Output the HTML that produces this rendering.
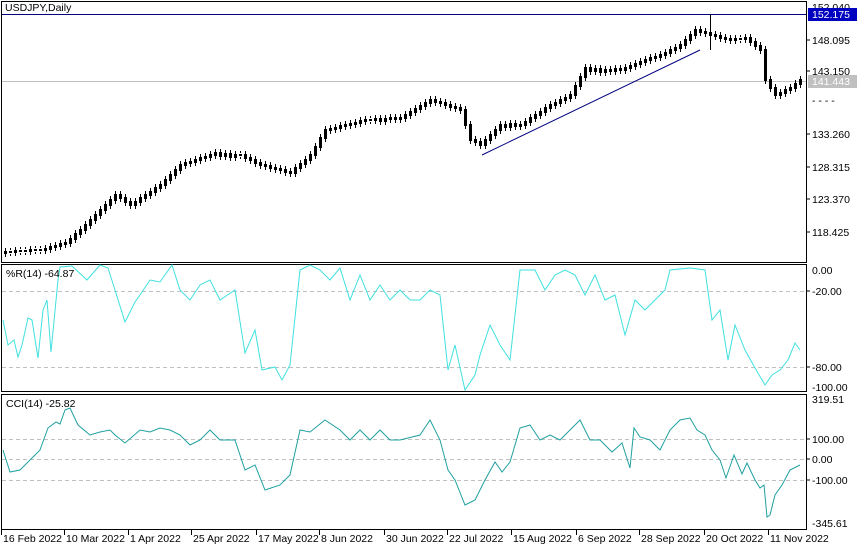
<!DOCTYPE html>
<html><head><meta charset="utf-8"><style>
html,body{margin:0;padding:0;background:#fff;width:860px;height:550px;overflow:hidden}
svg{display:block;font-family:"Liberation Sans",sans-serif;font-size:10.5px}
</style></head><body>
<svg width="860" height="550" xmlns="http://www.w3.org/2000/svg">
<rect width="860" height="550" fill="#fff"/>
<rect x="1.5" y="1.5" width="805" height="261" fill="none" stroke="#000"/>
<rect x="1.5" y="264.5" width="805" height="127" fill="none" stroke="#000"/>
<rect x="1.5" y="394.5" width="805" height="135" fill="none" stroke="#000"/>
<line x1="2" y1="14.5" x2="806" y2="14.5" stroke="#000080"/>
<line x1="2" y1="81.5" x2="806" y2="81.5" stroke="#c0c0c0"/>
<line x1="482" y1="155" x2="700" y2="50" stroke="#000080"/>
<line x1="2" y1="291.5" x2="806" y2="291.5" stroke="#c0c0c0" stroke-dasharray="4,3"/>
<line x1="2" y1="367.5" x2="806" y2="367.5" stroke="#c0c0c0" stroke-dasharray="4,3"/>
<line x1="2" y1="439.5" x2="806" y2="439.5" stroke="#c0c0c0" stroke-dasharray="4,3"/>
<line x1="2" y1="459.5" x2="806" y2="459.5" stroke="#c0c0c0" stroke-dasharray="4,3"/>
<line x1="2" y1="480.5" x2="806" y2="480.5" stroke="#c0c0c0" stroke-dasharray="4,3"/>
<defs>
<path id="c" d="M5.5 251V254M10.5 251V253M15.5 250V253M20.5 250V252M25.5 250V252M30.5 249V252M35.5 249V251M40.5 249V251M45.5 248V251M50.5 246V250M55.5 245V248M60.5 243V247M65.5 242V245M70.5 238V244M75.5 233V240M80.5 229V235M85.5 224V231M90.5 219V226M95.5 214V221M100.5 209V216M105.5 204V211M110.5 199V206M115.5 194V201M120.5 194V199M125.5 197V203M130.5 201V206M135.5 201V206M140.5 197V203M145.5 194V199M150.5 191V196M155.5 187V193M160.5 184V189M165.5 179V186M170.5 174V181M175.5 169V176M180.5 164V171M185.5 162V166M190.5 161V164M195.5 159V163M200.5 157V161M205.5 156V159M210.5 154V158M215.5 152V156M220.5 152V157M225.5 153V157M230.5 153V158M235.5 154V158M240.5 154V156M245.5 154V159M250.5 157V161M255.5 159V164M260.5 162V166M265.5 164V167M270.5 165V169M275.5 167V170M280.5 168V171M285.5 169V173M290.5 171V174M295.5 167V174M300.5 163V169M305.5 159V165M310.5 154V161M315.5 146V156M320.5 137V148M325.5 129V139M330.5 128V131M335.5 127V130M340.5 125V129M345.5 124V127M350.5 123V126M355.5 122V125M360.5 120V124M365.5 119V122M370.5 119V121M375.5 118V121M380.5 118V122M385.5 118V122M390.5 117V120M395.5 117V120M400.5 117V120M405.5 114V119M410.5 111V116M415.5 108V113M420.5 105V110M425.5 102V107M430.5 99V104M435.5 99V103M440.5 101V104M445.5 102V106M450.5 104V108M455.5 106V109M460.5 107V111M465.5 109V126M470.5 124V141M475.5 139V143M480.5 141V146M485.5 139V146M490.5 134V141M495.5 129V136M500.5 124V131M505.5 124V128M510.5 123V128M515.5 123V127M520.5 124V127M525.5 121V126M530.5 117V123M535.5 114V119M540.5 111V116M545.5 107V113M550.5 104V109M555.5 102V106M560.5 99V104M565.5 97V101M570.5 94V99M575.5 85V96M580.5 76V87M585.5 67V78M590.5 67V72M595.5 68V72M600.5 68V73M605.5 69V73M610.5 69V72M615.5 68V72M620.5 68V71M625.5 67V71M630.5 65V69M635.5 63V67M640.5 61V65M645.5 59V63M650.5 57V61M655.5 56V59M660.5 54V58M665.5 52V56M670.5 49V54M675.5 47V51M680.5 44V49M685.5 39V46M690.5 34V41M695.5 29V36M700.5 29V33M705.5 31V34M710.5 32V36M715.5 34V37M720.5 35V39M725.5 37V40M730.5 38V41M735.5 38V41M740.5 38V40M745.5 37V40M750.5 37V43M755.5 41V47M760.5 45V51M765.5 49V81M770.5 79V89M775.5 87V96M780.5 92V96M785.5 89V94M790.5 87V91M795.5 83V89M800.5 79V85"/>
</defs>
<use href="#c" stroke="#000" stroke-width="1" fill="none" transform="translate(0,-3)"/>
<use href="#c" stroke="#000" stroke-width="1" fill="none" transform="translate(0,3)"/>
<use href="#c" stroke="#000" stroke-width="3" fill="none"/>
<line x1="710.5" y1="14" x2="710.5" y2="50" stroke="#000"/>
<polyline fill="none" stroke="#40e0e0" stroke-width="1" points="3,320 8,345 14,340 18,357 22,345 28,318 32,320 38,358 43,310 47,300 51,352 58,280 60,267 72,266 87,280 100,265 108,268 115,290 125,322 135,302 140,295 150,280 160,282 172,265 180,290 190,300 200,285 210,280 220,300 235,290 245,353 255,330 262,370 275,367 282,380 290,365 300,270 310,265 320,270 330,280 340,268 350,300 360,275 370,300 380,285 390,300 400,290 410,300 420,300 430,290 440,295 448,370 455,345 465,390 475,375 480,355 490,325 500,345 510,360 520,270 535,270 545,290 555,275 565,270 575,275 585,295 595,275 605,300 615,295 625,335 635,300 645,310 655,300 665,290 670,270 690,268 705,270 712,320 720,310 728,360 735,325 745,350 755,368 765,385 772,375 780,370 788,360 795,343 800,350"/>
<polyline fill="none" stroke="#20a0a0" stroke-width="1" points="3,450 10,472 20,470 30,460 40,450 48,428 56,422 60,424 65,410 70,408 78,425 90,435 100,432 110,430 115,435 125,443 140,430 150,432 160,428 170,430 180,435 190,445 200,440 210,430 220,440 235,440 245,470 255,465 265,490 280,485 290,475 300,430 310,432 325,420 340,430 350,440 360,430 370,440 380,430 390,440 400,440 420,435 430,420 440,440 448,470 455,480 465,505 475,500 485,480 495,462 502,472 510,462 520,428 530,425 540,440 550,435 560,440 570,430 580,420 590,440 600,440 612,452 622,443 630,468 634,428 640,437 650,440 660,450 670,430 680,420 690,418 697,430 705,435 712,450 720,460 726,478 734,455 742,474 747,463 755,480 760,488 764,485 767,517 770,515 775,495 782,485 790,470 800,465"/>
<text x="5" y="11">USDJPY,Daily</text>
<text x="6" y="277">%R(14) -64.87</text>
<text x="6" y="407">CCI(14) -25.82</text>
<g fill="#000">
<text x="812" y="11">152.040</text>
<rect x="808" y="8" width="49" height="13" fill="#0000c0"/>
<text x="812" y="18" fill="#fff">152.175</text>
<text x="812" y="44">148.095</text>
<text x="812" y="75">143.150</text>
<rect x="808" y="75" width="49" height="13" fill="#c0c0c0"/>
<text x="812" y="85" fill="#fff">141.443</text>
<text x="812" y="104">- - - -</text>
<text x="812" y="138">133.260</text>
<text x="812" y="171">128.315</text>
<text x="812" y="203">123.370</text>
<text x="812" y="236">118.425</text>
<text x="812" y="274">0.00</text>
<text x="812" y="295">-20.00</text>
<text x="812" y="371">-80.00</text>
<text x="812" y="391">-100.00</text>
<text x="812" y="403">319.51</text>
<text x="812" y="443">100.00</text>
<text x="812" y="463">0.00</text>
<text x="812" y="484">-100.00</text>
<text x="812" y="527">-345.61</text>
</g>
<g stroke="#000">
<line x1="806" y1="40" x2="810" y2="40"/><line x1="806" y1="71" x2="810" y2="71"/>
<line x1="806" y1="134" x2="810" y2="134"/><line x1="806" y1="167" x2="810" y2="167"/>
<line x1="806" y1="199" x2="810" y2="199"/><line x1="806" y1="232" x2="810" y2="232"/>
<line x1="806" y1="291" x2="810" y2="291"/><line x1="806" y1="367" x2="810" y2="367"/>
<line x1="806" y1="439" x2="810" y2="439"/><line x1="806" y1="459" x2="810" y2="459"/>
<line x1="806" y1="480" x2="810" y2="480"/>
<path d="M1.5 530v5M64.5 530v5M128.5 530v5M191.5 530v5M256.5 530v5M319.5 530v5M384.5 530v5M447.5 530v5M511.5 530v5M576.5 530v5M639.5 530v5M704.5 530v5M768.5 530v5"/>
</g>
<g>
<text x="3" y="542">16 Feb 2022</text>
<text x="66" y="542">10 Mar 2022</text>
<text x="130" y="542">1 Apr 2022</text>
<text x="193" y="542">25 Apr 2022</text>
<text x="258" y="542">17 May 2022</text>
<text x="321" y="542">8 Jun 2022</text>
<text x="386" y="542">30 Jun 2022</text>
<text x="449" y="542">22 Jul 2022</text>
<text x="513" y="542">15 Aug 2022</text>
<text x="578" y="542">6 Sep 2022</text>
<text x="641" y="542">28 Sep 2022</text>
<text x="706" y="542">20 Oct 2022</text>
<text x="770" y="542">11 Nov 2022</text>
</g>
</svg>
</body></html>
